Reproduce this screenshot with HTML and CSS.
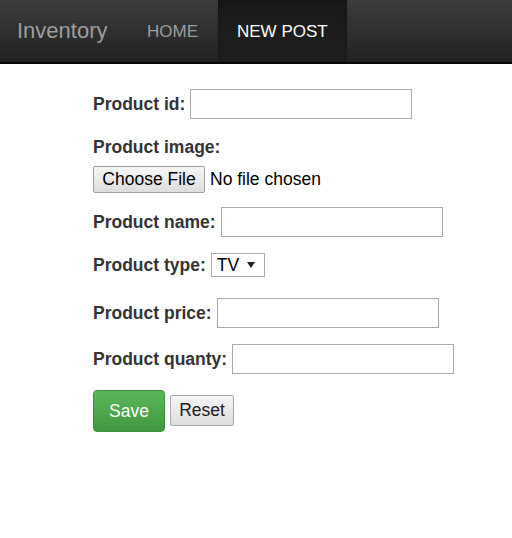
FILE: index.html
```html
<!DOCTYPE html>
<html>
<head>
<meta charset="utf-8">
<link rel="stylesheet" href="styles.css">
</head>
<body>
<nav class="navbar">
  <a class="brand">Inventory</a>
  <a class="nav-item">HOME</a>
  <a class="nav-item active">NEW POST</a>
</nav>
<form class="form">
  <div class="row row-id">
    <label>Product id:</label>
    <input type="text" class="field">
  </div>
  <div class="row row-imglabel">
    <label>Product image:</label>
  </div>
  <div class="row row-file">
    <button type="button" class="file-btn">Choose File</button>
    <span class="file-text">No file chosen</span>
  </div>
  <div class="row row-name">
    <label>Product name:</label>
    <input type="text" class="field">
  </div>
  <div class="row row-type">
    <label>Product type:</label>
    <span class="select-wrap"><select class="select"><option>TV</option></select></span>
  </div>
  <div class="row row-price">
    <label>Product price:</label>
    <input type="text" class="field">
  </div>
  <div class="row row-qty">
    <label>Product quanty:</label>
    <input type="text" class="field">
  </div>
  <div class="row row-btns">
    <button type="button" class="btn-save">Save</button>
    <button type="button" class="btn-reset">Reset</button>
  </div>
</form>
</body>
</html>
```
FILE: styles.css
```css
html, body {
  margin: 0;
  padding: 0;
  background: #fff;
  font-family: "Liberation Sans", Arial, sans-serif;
}
.navbar {
  display: flex;
  align-items: stretch;
  height: 62px;
  background: linear-gradient(to bottom, #3c3c3c 0%, #222 100%);
  border-bottom: 2px solid #080808;
}
.brand {
  display: flex;
  align-items: center;
  padding: 0 0 0 17px;
  width: 131px;
  box-sizing: border-box;
  font-size: 22px;
  color: #9d9d9d;
}
.nav-item {
  display: flex;
  align-items: center;
  padding: 1px 20px 0 16px;
  font-size: 17px;
  color: #9d9d9d;
}
.nav-item.active {
  padding: 1px 19px 0 19px;
  color: #fff;
  background: linear-gradient(to bottom, #1a1a1a 0%, #202020 100%);
  box-shadow: inset 0 3px 9px rgba(0,0,0,0.25);
}
.form {
  padding-left: 93px;
  color: #333;
}
.row {
  display: flex;
  align-items: center;
}
label {
  font-weight: bold;
  font-size: 17.5px;
  margin-right: 5px;
}
.field {
  width: 222px;
  height: 30px;
  box-sizing: border-box;
  border: 1px solid #a9a9a9;
  margin: 0;
  padding: 0 4px;
}
.row-id { margin-top: 25px; }
.row-imglabel { margin-top: 18px; height: 20px; }
.row-file { margin-top: 9px; }
.row-name { margin-top: 14px; }
.row-type { margin-top: 16px; }
.row-price { margin-top: 21px; }
.row-qty { margin-top: 16px; }
.row-btns { margin-top: 16px; align-items: flex-start; }
.file-btn {
  width: 112px;
  height: 27px;
  margin: 0 5px 0 0;
  padding: 0;
  font-family: "Liberation Sans", Arial, sans-serif;
  font-size: 17.5px;
  color: #000;
  background: linear-gradient(to bottom, #f6f6f6 0%, #dddddd 100%);
  border: 1px solid #a0a0a0;
  border-radius: 2px;
}
.file-text {
  font-size: 17.5px;
  color: #000;
}
.select-wrap {
  position: relative;
  display: inline-block;
}
.select {
  appearance: none;
  -webkit-appearance: none;
  width: 54px;
  height: 24px;
  box-sizing: border-box;
  margin: 0;
  padding: 0 0 0 5px;
  border: 1px solid #a9a9a9;
  border-radius: 0;
  background: #fff;
  font-family: "Liberation Sans", Arial, sans-serif;
  font-size: 17.5px;
  color: #000;
}
.select-wrap::after {
  content: "";
  position: absolute;
  right: 10px;
  top: 9px;
  border-left: 4px solid transparent;
  border-right: 4px solid transparent;
  border-top: 6px solid #222;
  pointer-events: none;
}
.btn-save {
  width: 72px;
  height: 42px;
  margin: 0 5px 0 0;
  padding: 0;
  font-family: "Liberation Sans", Arial, sans-serif;
  font-size: 17.5px;
  color: #fff;
  background: linear-gradient(to bottom, #5cb85c 0%, #419641 100%);
  border: 1px solid #3e8f3e;
  border-radius: 4px;
}
.btn-reset {
  width: 64px;
  height: 31px;
  margin: 5px 0 0 0;
  padding: 0;
  font-family: "Liberation Sans", Arial, sans-serif;
  font-size: 17.5px;
  color: #222;
  background: linear-gradient(to bottom, #f4f4f4 0%, #dedede 100%);
  border: 1px solid #a8a8a8;
  border-radius: 2px;
}
```
